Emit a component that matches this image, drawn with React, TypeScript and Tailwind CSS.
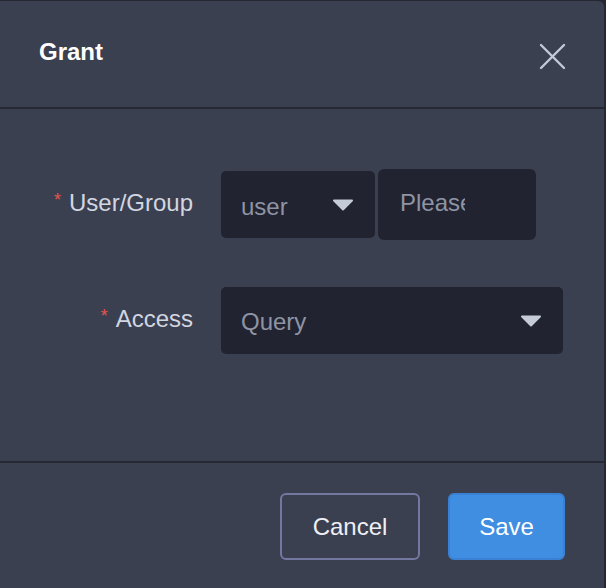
import React from 'react';

function Caret() {
  return (
    <svg width="22" height="12" viewBox="0 0 22 12" className="shrink-0">
      <path d="M2 1.5 L20 1.5 L11 10.5 Z" fill="#c5ccd8" stroke="#c5ccd8" strokeWidth="2" strokeLinejoin="round" />
    </svg>
  );
}

export default function App() {
  return (
    <div className="w-[606px] h-[588px] bg-[#252833] overflow-hidden font-['Liberation_Sans',Arial,sans-serif]">
      <div className="w-[604px] h-[588px] mt-px rounded-tr-md bg-[#3b4051] flex flex-col">
        {/* header */}
        <div className="h-[108px] shrink-0 flex items-center justify-between pl-[39px] pr-[38px] border-b-2 border-[#262833]">
          <h2 className="text-[24px] font-bold text-white leading-none mt-[-4px]">Grant</h2>
          <button className="w-[28px] h-[28px] flex items-center justify-center mt-[4px]">
            <svg width="28" height="28" viewBox="0 0 28 28">
              <path d="M3 3 L26 26 M26 3 L3 26" stroke="#c3c9d5" strokeWidth="2.4" strokeLinecap="round" />
            </svg>
          </button>
        </div>

        {/* body */}
        <div className="h-[354px] shrink-0 pt-[62px] flex flex-col gap-[49px] border-b-2 border-[#262833]">
          <div className="flex items-center h-[67px]">
            <label className="w-[193px] text-right text-[24px] text-[#d2d6e0] leading-none mt-[-3px]">
              <span className="text-[#e5544c] text-[18px] align-top mr-[8px]">*</span>User/Group
            </label>
            <div className="ml-[28px] flex items-center gap-[3px]">
              <div className="w-[154px] h-[67px] rounded-[5px] bg-[#212330] flex items-center justify-between pl-[20px] pr-[21px]">
                <span className="text-[24px] text-[#8f94a4] mt-[4px]">user</span>
                <Caret />
              </div>
              <div className="w-[158px] h-[71px] rounded-[6px] bg-[#212330] flex items-center pl-[22px] pb-[3px] overflow-hidden">
                <span className="w-[65px] overflow-hidden whitespace-nowrap text-[24px] text-[#8f94a4]">Please input</span>
              </div>
            </div>
          </div>
          <div className="flex items-center h-[67px]">
            <label className="w-[193px] text-right text-[24px] text-[#d2d6e0] leading-none mt-[-3px]">
              <span className="text-[#e5544c] text-[18px] align-top mr-[8px]">*</span>Access
            </label>
            <div className="ml-[28px] w-[342px] h-[67px] rounded-[5px] bg-[#212330] flex items-center justify-between pl-[20px] pr-[21px]">
              <span className="text-[24px] text-[#8f94a4] mt-[3px]">Query</span>
              <Caret />
            </div>
          </div>
        </div>

        {/* footer */}
        <div className="flex justify-end gap-[28px] pt-[30px] pr-[39px]">
          <button className="w-[140px] h-[67px] rounded-[6px] border-2 border-[#7378a0] text-[24px] text-[#eef0f4]">
            Cancel
          </button>
          <button className="w-[117px] h-[67px] rounded-[6px] border-2 border-[#3a80d4] bg-[#408ee1] text-[24px] text-white">
            Save
          </button>
        </div>
      </div>
    </div>
  );
}
